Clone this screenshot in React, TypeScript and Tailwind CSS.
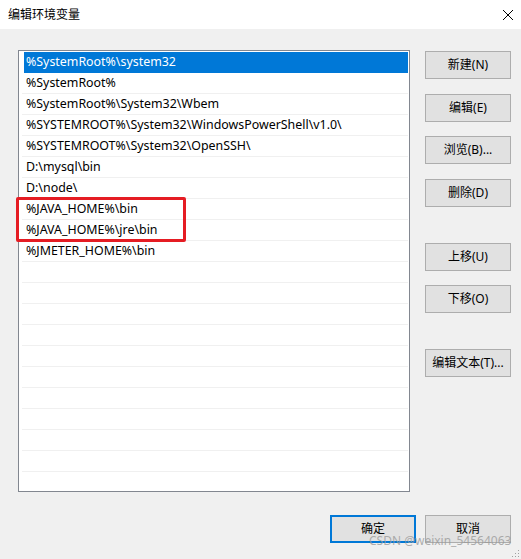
import React from "react";

const FONT = '"Segoe UI", "Noto Sans", "Noto Sans CJK SC", sans-serif';

const paths = [
  "%SystemRoot%\\system32",
  "%SystemRoot%",
  "%SystemRoot%\\System32\\Wbem",
  "%SYSTEMROOT%\\System32\\WindowsPowerShell\\v1.0\\",
  "%SYSTEMROOT%\\System32\\OpenSSH\\",
  "D:\\mysql\\bin",
  "D:\\node\\",
  "%JAVA_HOME%\\bin",
  "%JAVA_HOME%\\jre\\bin",
  "%JMETER_HOME%\\bin",
];

// list keeps drawing empty rows to the bottom of the box
const TOTAL_ROWS = 21;

function Btn({ label, primary = false }: { label: string; primary?: boolean }) {
  return (
    <div
      className={`h-[28px] w-[86px] flex items-center justify-center bg-[#e1e1e1] text-[12px] text-black whitespace-nowrap ${
        primary ? "border-2 border-[#0078d7]" : "border border-[#adadad]"
      }`}
    >
      {label}
    </div>
  );
}

export default function App() {
  const rows = Array.from({ length: TOTAL_ROWS }, (_, i) => paths[i] ?? "");

  return (
    <div className="w-[521px] h-[559px] flex flex-col bg-[#f0f0f0]" style={{ fontFamily: FONT }}>
      {/* Title bar */}
      <div className="h-[29px] bg-white flex items-center justify-between pl-[8px] pr-[7px]">
        <span className="text-[12px] text-black">编辑环境变量</span>
        <svg width="12" height="12" viewBox="0 0 12 12">
          <path d="M1 1 L11 11 M11 1 L1 11" stroke="#000" strokeWidth="1" />
        </svg>
      </div>

      <div className="relative flex-1">
        <div className="flex pt-[21px] pl-[18px]">
          {/* Path list */}
          <div className="relative w-[392px] h-[442px] border border-[#828790] bg-white overflow-hidden pt-[1px] pl-[1px] pr-[1px]">
            {rows.map((p, i) => (
              <div
                key={i}
                className={`h-[21px] flex items-center text-[12.4px] whitespace-nowrap ${
                  i === 0
                    ? "bg-[#0078d7] text-white ml-[4px] pl-[2px]"
                    : "text-black border-b border-[#f0f0f0] ml-[2px] pl-[4px]"
                }`}
              >
                {p}
              </div>
            ))}
          </div>

          {/* Side buttons */}
          <div className="ml-[15px] pt-[1px] flex flex-col">
            <Btn label="新建(N)" />
            <div className="mt-[15px]"><Btn label="编辑(E)" /></div>
            <div className="mt-[14px]"><Btn label="浏览(B)..." /></div>
            <div className="mt-[15px]"><Btn label="删除(D)" /></div>
            <div className="mt-[36px]"><Btn label="上移(U)" /></div>
            <div className="mt-[14px]"><Btn label="下移(O)" /></div>
            <div className="mt-[36px]"><Btn label="编辑文本(T)..." /></div>
          </div>
        </div>

        {/* Red highlight drawn over the JAVA_HOME rows */}
        <div className="absolute left-[16px] top-[168px] w-[170px] h-[45px] border-[3px] border-[#e51c23] rounded-[2px]" />

        {/* Dialog buttons */}
        <div className="flex justify-end gap-[9px] pr-[10px] mt-[23px]">
          <Btn label="确定" primary />
          <Btn label="取消" />
        </div>

        {/* Watermark */}
        <div className="absolute left-[369px] top-[504px] text-[12px] leading-[16px] text-[#9a9a9a]/80 whitespace-nowrap">
          CSDN @weixin_54564063
        </div>

        {/* Resize grip */}
        <svg className="absolute right-[1px] bottom-[1px]" width="10" height="10" viewBox="0 0 10 10">
          <rect x="8" y="2" width="1" height="1" fill="#a0a0a0" />
          <rect x="5" y="5" width="1" height="1" fill="#a0a0a0" />
          <rect x="8" y="5" width="1" height="1" fill="#a0a0a0" />
          <rect x="2" y="8" width="1" height="1" fill="#a0a0a0" />
          <rect x="5" y="8" width="1" height="1" fill="#a0a0a0" />
          <rect x="8" y="8" width="1" height="1" fill="#a0a0a0" />
        </svg>
      </div>
    </div>
  );
}
